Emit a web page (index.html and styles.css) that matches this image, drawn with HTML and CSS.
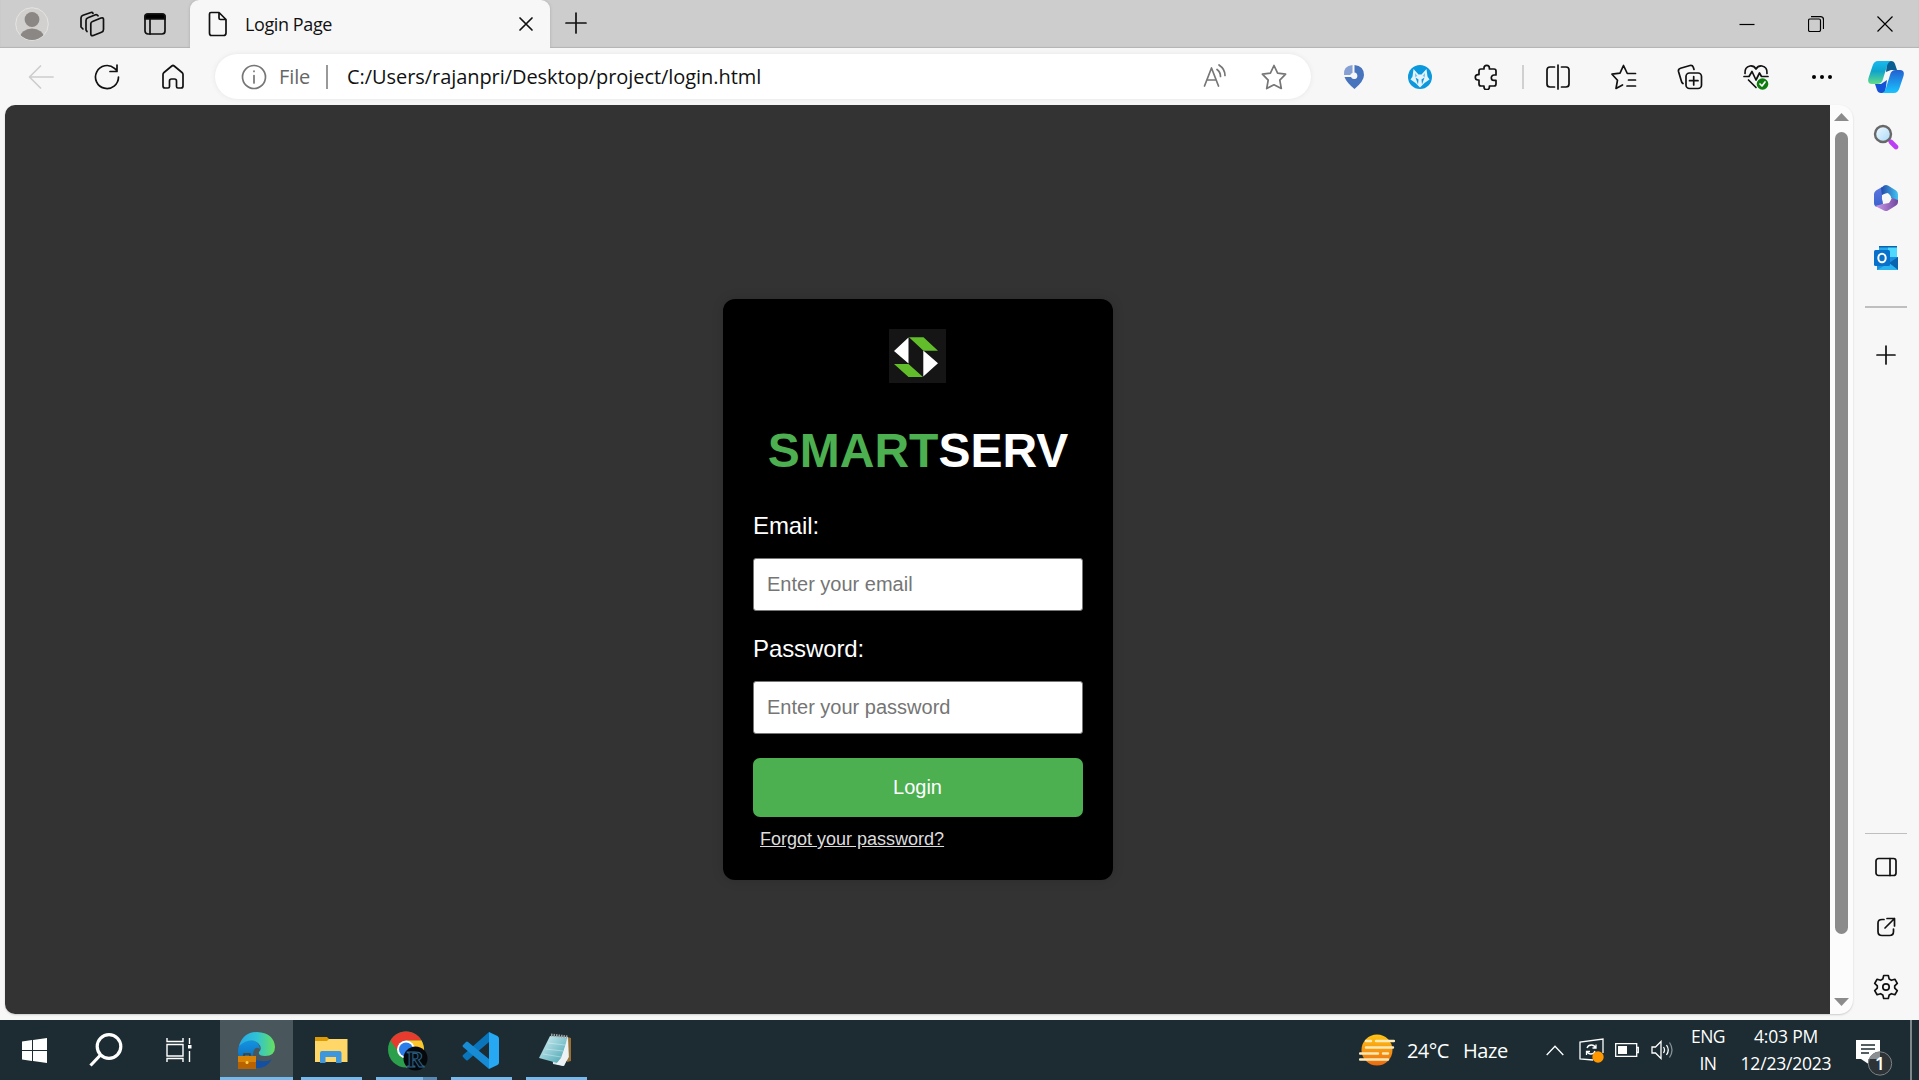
FILE: index.html
```html
<!DOCTYPE html>
<html lang="en">
<head>
<meta charset="utf-8">
<title>Login Page</title>
<link rel="stylesheet" href="styles.css">
</head>
<body>
<div class="screen">
  <header class="tabstrip">
    <div class="strip-tools">
      <svg class="avatar" width="34" height="34" viewBox="0 0 34 34"><defs><clipPath id="av"><circle cx="17" cy="17" r="16"/></clipPath></defs><circle cx="17" cy="17" r="16.3" fill="#d2d0ce" stroke="#e6e4e1"/><g fill="#8b8784" clip-path="url(#av)"><circle cx="17" cy="12.500" r="7.400"/><ellipse cx="17" cy="31" rx="12" ry="9.500"/></g></svg>
      <svg class="line" width="26" height="26" viewBox="0 0 26 26"><path d="M13.500 10.500l8.500-3.500q2.500-.8 2.500 1.500v10q0 2-2 2.800l-8.200 3.200q-2.500.8-2.500-1.700V12.700q0-1.600 1.700-2.200z"/><path d="M8 20.500l-1-1.500V9.500q0-2 2-2.700l7.500-3q1.500-.5 2.500 1M4 18l-2-2V7q0-2 2-2.700L12 1.500q1.500-.4 2 .8"/></svg>
      <svg class="line" width="24" height="24" viewBox="0 0 24 24"><rect x="2" y="2" width="20" height="20" rx="3"/><path d="M2 4.500q0-2.500 2.500-2.500h15Q22 2 22 4.500V7H2z" fill="#000"/><path d="M7 7v15"/></svg>
    </div>
    <div class="tab">
      <svg class="line" width="20" height="26" viewBox="0 0 20 26"><path d="M3 1.500h8l7 7V22q0 2.500-2.500 2.500h-12Q1.500 24.500 1.500 22V3q0-1.500 1.500-1.500zM11 1.500V7q0 1.500 1.500 1.500H18"/></svg>
      <span class="tab-title">Login Page</span>
      <svg class="line" width="16" height="16" viewBox="0 0 16 16"><path d="M2 2l12 12M14 2L2 14"/></svg>
    </div>
    <svg class="line new-tab" width="22" height="22" viewBox="0 0 22 22"><path d="M11 1v20M1 11h20"/></svg>
    <div class="window-controls">
      <svg class="thin" width="16" height="16" viewBox="0 0 16 16"><path d="M.5 8.500h15"/></svg>
      <svg class="thin" width="16" height="16" viewBox="0 0 16 16"><rect x=".5" y="3" width="12" height="12.500" rx="1.500"/><path d="M3 .7h9.500q3 0 3 3V13"/></svg>
      <svg class="thin" width="16" height="16" viewBox="0 0 16 16"><path d="M.5.5l15 15M15.500.5l-15 15"/></svg>
    </div>
  </header>

  <nav class="toolbar">
    <div class="cells nav-cells">
      <span class="cell"><svg class="line faded" width="26" height="24" viewBox="0 0 26 24"><path d="M25 12H2M12.500 1L1.500 12l11 11"/></svg></span>
      <span class="cell"><svg class="line" width="26" height="26" viewBox="0 0 26 26"><path d="M24.500 13a11.500 11.500 0 1 1-4-8.700L23 6.700M23 1v6.500h-7"/></svg></span>
      <span class="cell"><svg class="line" width="24" height="26" viewBox="0 0 24 26"><path d="M2 10.500q0-1.200 1-2L10.800 2q1.200-1 2.400 0L21 8.500q1 .8 1 2V22q0 2-2 2h-3q-1.500 0-1.500-1.500V17q0-2-2-2h-3q-2 0-2 2v5.500Q8.500 24 7 24H4q-2 0-2-2z"/></svg></span>
    </div>
    <div class="address">
      <svg class="line gray" width="26" height="26" viewBox="0 0 26 26"><circle cx="13" cy="13" r="11.500"/><path d="M13 11.500V19M13 7v.5"/></svg>
      <span class="scheme">File</span>
      <span class="bar"></span>
      <span class="url">C:/Users/rajanpri/Desktop/project/login.html</span>
      <svg class="line gray read" width="24" height="24" viewBox="0 0 24 24"><path d="M1.500 22L8.500 4l7 18M4 16h9M14 5.500q3.500 2.500 3.500 7M16 1q6 4 6 10.500"/></svg>
      <svg class="line gray" width="26" height="26" viewBox="0 0 26 26"><path d="M13 1.500l3.600 7.700 8 1-5.800 6 1.500 8.300L13 20.800l-7.300 3.700 1.500-8.300-5.800-6 8-1z"/></svg>
    </div>
    <div class="cells tool-cells">
      <span class="cell"><svg width="22" height="26" viewBox="0 0 22 26"><path d="M9.500 1v7.500L7 11H1Q0 2 9.500 1z" fill="#87a0d4"/><path d="M11.500 1q9.500 1 9.500 10 0 6-9.500 14Q3.500 18.500 1.500 13H8a3.300 3.300 0 1 0 3.500-4.500z" fill="#4873bd"/></svg></span>
      <span class="cell"><svg width="26" height="26" viewBox="0 0 26 26"><circle cx="13" cy="13" r="12" fill="#0b98dc"/><path d="M6.500 5l5 5.500h3l5-5.500 1 7.500 2 3-5 3.500-4.500 4.500-4.500-4.500-5-3.500 2-3z" fill="#e4f3fc"/><path d="M8.500 13.500l3 2-.5 5zM17.500 13.500l-3 2 .5 5z" fill="#0b98dc"/><path d="M8 9l2.500 3-2.500 1zM18 9l-2.500 3 2.500 1z" fill="#7cc8ee"/></svg></span>
      <span class="cell"><svg class="line" width="24" height="26" viewBox="0 0 24 26"><path d="M5 7q0-2 2-2h3V4a2.700 2.700 0 0 1 5.400 0v1H20q2 0 2 2v4h-2a2.700 2.700 0 0 0 0 5.400h2V20q0 2-2 2h-4.600v1a2.700 2.700 0 0 1-5.400 0v-1H7q-2 0-2-2v-4H4a2.700 2.700 0 0 1 0-5.400h1z"/></svg></span>
      <span class="split"></span>
      <span class="cell"><svg class="line" width="26" height="26" viewBox="0 0 26 26"><path d="M13 1v24M9.500 3H5Q2 3 2 6v14q0 3 3 3h4.500M16.500 3H21q3 0 3 3v14q0 3-3 3h-4.500"/></svg></span>
      <span class="cell"><svg class="line" width="28" height="26" viewBox="0 0 28 26"><path d="M25.500 9.500h-8.200L13.500 1.500 10 9.200l-8 1 5.500 6L6 24.500l6.500-3.500M18.500 16h7M17 22h8.500"/></svg></span>
      <span class="cell"><svg class="line" width="26" height="26" viewBox="0 0 26 26"><rect x="9" y="9" width="15.500" height="15.500" rx="3.500"/><path d="M16.700 12.500v8.500M12.500 16.700H21M6 19.500q-1.200-.8-1.500-2L1.500 7.500Q1 5 3.500 4.200L13 1.500q2.500-.5 3.300 1.700l.7 2.300"/></svg></span>
      <span class="cell heart"><svg class="line" width="26" height="26" viewBox="0 0 26 26"><path d="M2 9.500Q1.500 3 7 2q4-.5 6 3 2-3.500 6-3 5.500 1 5 7.500M1 12.500h5l3-5 4 8.500 3.500-7 2 3.500H25M5.500 16l7.500 7.500"/><circle cx="19.500" cy="20" r="5.800" fill="#107c10" stroke="none"/><path d="M17 20l2 2 3-4" stroke="#fff"/></svg></span>
      <span class="cell"><svg width="24" height="6" viewBox="0 0 24 6"><circle cx="4" cy="3" r="2"/><circle cx="12" cy="3" r="2"/><circle cx="20" cy="3" r="2"/></svg></span>
      <span class="cell copilot"><svg width="36" height="34" viewBox="0 0 36 34"><defs><linearGradient id="cg1" x1="0" y1="0" x2="0" y2="1"><stop offset="0" stop-color="#18b9f0"/><stop offset=".45" stop-color="#0fa4cc"/><stop offset="1" stop-color="#62dc87"/></linearGradient><linearGradient id="cg2" x1="0" y1="0" x2="0" y2="1"><stop offset="0" stop-color="#2460d0"/><stop offset="1" stop-color="#18c4ff"/></linearGradient></defs><path d="M19 1h4q3 0 4 3l2 6h-6l-5 2z" fill="#0b5d91"/><path d="M17 33h-4q-3 0-4-3l-2-6h6l6-4z" fill="#1453d8"/><path d="M10 1h13q-3 1-4 5l-4 13q-1 5-6 5H4q-5 0-3.500-6l4-12Q6 1 10 1z" fill="url(#cg1)"/><path d="M26 33H14q3-1 4-5l4-13q1-5 6-5h4q5 0 3.500 6l-4 12q-1.500 5-5.500 5z" fill="url(#cg2)"/></svg></span>
    </div>
  </nav>

  <div class="workspace">
    <div class="frame">
      <main class="page">
        <form class="card">
          <svg class="logo" width="57" height="54" viewBox="0 0 57 54"><path fill="#151515" d="M0 0h57v54H0z"/><path fill="#fff" d="M19.500 8.500v26L5 22zM34.300 21.500v26L49 34.300z"/><path fill="#62bd2a" d="M20 8.300h14.500L49 21.700H34.500zM5 35h14.500l14.500 13H19.500z"/></svg>
          <h1 class="brand"><span class="brand-green">SMART</span>SERV</h1>
          <label class="label" for="email">Email:</label>
          <input class="field" id="email" type="email" placeholder="Enter your email">
          <label class="label" for="password">Password:</label>
          <input class="field" id="password" type="password" placeholder="Enter your password">
          <button class="submit" type="button">Login</button>
          <a class="forgot" href="#">Forgot your password?</a>
        </form>
      </main>
      <div class="scrollbar">
        <svg width="15" height="8" viewBox="0 0 15 8"><path d="M7.500 0L15 8H0z" fill="#8b8b8b"/></svg>
        <span class="thumb"></span>
        <svg class="down" width="15" height="8" viewBox="0 0 15 8"><path d="M7.500 8L15 0H0z" fill="#8b8b8b"/></svg>
      </div>
    </div>
    <aside class="sidebar">
      <svg class="side-search" width="26" height="26" viewBox="0 0 26 26"><defs><linearGradient id="lens" x1="0" y1="0" x2="1" y2="1"><stop offset="0" stop-color="#f1fbff"/><stop offset="1" stop-color="#a9d8f8"/></linearGradient></defs><path d="M15 15l3.500 3.500" stroke="#777" stroke-width="3"/><circle cx="10" cy="10" r="8" fill="url(#lens)" stroke="#686868" stroke-width="2.400"/><path d="M18 18l5 5" stroke="#bd3cf5" stroke-width="4.600" stroke-linecap="round"/></svg>
      <svg width="26" height="28" viewBox="0 0 26 28"><defs><linearGradient id="m1" x1="0" y1="0" x2="0" y2="1"><stop offset="0" stop-color="#5c76df"/><stop offset="1" stop-color="#3b62cd"/></linearGradient><linearGradient id="m2"><stop offset="0" stop-color="#2348a8"/><stop offset="1" stop-color="#42c4f3"/></linearGradient><linearGradient id="m3"><stop offset="0" stop-color="#cf9bea"/><stop offset="1" stop-color="#70479f"/></linearGradient></defs><path d="M9 3L3 6.500Q1 8 1 10v9q0 3 3 4l6-3-1-8z" fill="url(#m1)"/><path d="M8 4l3-2.500q2-1 4 0l8 5q2 1.500 2 4V18l-7-4-3-5-6 2z" fill="url(#m2)"/><path d="M2 22l8-2 6-1 3-5 6 2v2q0 2-2 3.500l-8 5q-2 1-4 0z" fill="url(#m3)"/><circle cx="13.500" cy="14" r="4.600" fill="#f7f7f7"/></svg>
      <svg class="side-mail" width="26" height="26" viewBox="0 0 26 26"><path d="M6 1h18v12H6z" fill="#50d9ff"/><path d="M6 1h9v12H6z" fill="#28a8ea"/><path d="M6 1h18v1.500H6z" fill="#0864b0"/><path d="M4 12h21v13H4z" fill="#1990df"/><path d="M25 12l-9 6 9 7z" fill="#0b65ae"/><path d="M4 25l12-7 9 7z" fill="#29b4ef"/><rect x="1" y="5" width="16" height="16" rx="1.500" fill="#0871cb"/><ellipse cx="9" cy="13" rx="3.700" ry="4.200" fill="none" stroke="#fff" stroke-width="2"/></svg>
      <span class="side-rule"></span>
      <svg class="line side-plus" width="20" height="20" viewBox="0 0 20 20"><path d="M10 1v18M1 10h18"/></svg>
      <div class="side-bottom">
        <svg class="line" width="24" height="20" viewBox="0 0 24 20"><rect x="2" y="1.500" width="20" height="17" rx="2.500"/><path d="M16 1.500v17"/></svg>
        <svg class="line" width="20" height="20" viewBox="0 0 20 20"><path d="M8 2.500H6Q2 2.500 2 6v8.500Q2 18.500 6 18.500h7.500q4 0 4-4V12M11 1.500h7.500V9M18.500 1.500L9 11"/></svg>
        <svg class="line" width="26" height="26" viewBox="0 0 26 26"><path d="M10.700 1.500h4.600l.9 3.600 2.200 1.200 3.500-1L24.300 9.400l-2.600 2.500v2.200l2.600 2.500-2.400 4.100-3.500-1-2.200 1.200-.9 3.600h-4.600l-.9-3.600-2.200-1.200-3.500 1-2.400-4.100 2.600-2.500v-2.200L1.700 9.400l2.400-4.100 3.500 1 2.200-1.200z"/><circle cx="13" cy="13" r="3.200"/></svg>
      </div>
    </aside>
  </div>

  <footer class="taskbar">
    <span class="sys"><svg width="25" height="25" viewBox="0 0 25 25" fill="#fff"><path d="M0 3.500l10-1.400V12H0zM11 2l14-2v12H11zM0 13h10v9.900l-10-1.400zM11 13h14v12l-14-2z"/></svg></span>
    <span class="sys"><svg width="34" height="34" viewBox="0 0 34 34" fill="none" stroke="#fff" stroke-width="3.200"><circle cx="20" cy="13.500" r="11.800"/><path d="M11.500 22L1.500 32.500"/></svg></span>
    <span class="sys"><svg width="26" height="24" viewBox="0 0 26 24" fill="none" stroke="#fff" stroke-width="1.400"><path d="M1 6.500h16V18H1zM1 0v3.500h16V0M1 24v-3.500h16V24M23.500 0v6M23.500 13v11"/><path d="M22 7h3.500v3.500H22z" fill="#fff" stroke="none"/></svg></span>
    <span class="app app-active"><svg width="37" height="37" viewBox="0 0 37 37"><defs><linearGradient id="e1"><stop offset="0" stop-color="#27a8e3"/><stop offset=".5" stop-color="#2fc3d5"/><stop offset="1" stop-color="#68df5b"/></linearGradient><linearGradient id="e2" x1="0" y1="0" x2="0" y2="1"><stop offset="0" stop-color="#1494e0"/><stop offset="1" stop-color="#0a62b5"/></linearGradient></defs><path d="M14 16q-2 12 9 13 7 1 11-2-5 9-14 9Q6 36 7 22z" fill="#1450a2"/><path d="M0 20Q0 8 11 8q10 0 11 9-4-3-6 1-3 6 2 13-3 4-9 3Q0 29 0 20z" fill="url(#e2)"/><path d="M1 14Q5 0 19 0q17 1 18 15 0 9-10 9-7 0-6-4 4-4-1-9Q12 5 1 14z" fill="url(#e1)"/><path d="M0 24h18v13H0z" fill="#d98306"/><path d="M0 30h18v7H0z" fill="#b86200"/><path d="M6 24v-2h6v2" fill="none" stroke="#5b3a10" stroke-width="1.500"/><circle cx="9" cy="30.500" r="1.500" fill="#ffd340"/></svg></span>
    <span class="app"><svg width="33" height="28" viewBox="0 0 33 28"><path d="M0 1h12l3 3v6H0z" fill="#dc9b05"/><path d="M0 5h12l2-2h18.500v23H0z" fill="#ffd768"/><path d="M5 27V17q0-2 2-2h17.500q2 0 2 2v10H21v-6H10.500v6z" fill="#3e97dd"/></svg></span>
    <span class="app app-stack"><svg width="40" height="40" viewBox="0 0 40 40"><circle cx="18" cy="18.500" r="18" fill="#2b9f4b"/><path d="M2.500 9.500A18 18 0 0 1 33.600 9.500H18q-8 0-8.500 10z" fill="#e63b2e"/><path d="M18 9.500h15.600Q40 23 30 32l-12 4.500 8-14z" fill="#fcc62c"/><circle cx="18" cy="18.500" r="9" fill="#fff"/><circle cx="18" cy="18.500" r="7" fill="#2b7de9"/><circle cx="27.500" cy="27.500" r="12" fill="#05090d"/><text x="27.500" y="35.500" text-anchor="middle" font-family="Liberation Serif, serif" font-size="24" font-weight="bold" fill="#0b1015" stroke="#2c6288" stroke-width="1">R</text></svg></span>
    <span class="app"><svg width="37" height="37" viewBox="0 0 37 37"><path d="M27 0v10L6 28q-1 1-2 0l-3-3q-1-1 0-2z" fill="#0a75ba"/><path d="M1 13l3-3q1-1 2 0l21 17v10L1 15q-1-1 0-2z" fill="#178bd4"/><path d="M27 0l8.500 4Q37 5 37 6.500v24q0 1.500-1.500 2.500L27 37z" fill="#27a8f2"/></svg></span>
    <span class="app"><svg width="34" height="34" viewBox="0 0 34 34"><defs><linearGradient id="np" x1="0" y1="0" x2="1" y2="1"><stop offset="0" stop-color="#d9f3f7"/><stop offset="1" stop-color="#3f9fae"/></linearGradient></defs><path d="M29 4l4 1v23l-4 1z" fill="#9a7134"/><path d="M13 3l17 1 1 20-6 9-10-2z" fill="#d8e3e7"/><path d="M12 3l17 2-6 26L1 25z" fill="url(#np)"/><path d="M23 25l7-20v20l-4 8-8-2z" fill="#edf3f5"/><path d="M13 2l17 2" stroke="#9aa3a7" stroke-width="3" stroke-dasharray="1.500 1"/><path d="M10 10l17 2M8 16l17 2M5 21l18 3" stroke="#fff" stroke-opacity=".35"/></svg></span>

    <div class="tray">
      <svg width="36" height="32" viewBox="0 0 36 32"><defs><linearGradient id="sun" x1="0" y1="0" x2="0" y2="1"><stop offset="0" stop-color="#ffc515"/><stop offset="1" stop-color="#ec6b10"/></linearGradient></defs><circle cx="18" cy="16" r="15.500" fill="url(#sun)"/><g stroke="#ffe9b5" stroke-width="2.400" stroke-linecap="round"><path d="M7 7h5M17 7h18M7 13.500h27M1 19.500h18M24 19.500h5M1 25.500h28"/></g></svg>
      <span class="weather temp">24°C</span>
      <span class="weather haze">Haze</span>
      <svg class="tray-line chevron" width="18" height="11" viewBox="0 0 18 11"><path d="M.7 10L9 1.200 17.300 10"/></svg>
      <svg class="tray-line update" width="26" height="26" viewBox="0 0 26 26"><path d="M14 23L1 22V5l23-3v14M8 11q1-3 4.500-3 3 0 4 3M17 7.500V11h-3.500M16 14q-1 3-4 3t-4-2.500M7.500 18v-3.500H11"/><circle cx="19" cy="20" r="5.700" fill="#ff9800" stroke="none"/></svg>
      <svg class="tray-line battery" width="24" height="14" viewBox="0 0 24 14"><path d="M.7.7h21v12.600H.7zM21.700 4.500h1.600v5h-1.600"/><path d="M3 3h9v8H3z" fill="#fff" stroke="none"/></svg>
      <svg class="tray-line speaker" width="23" height="20" viewBox="0 0 23 20"><path d="M1 7h3.500L10 1.500v17L4.500 13H1zM12.500 7q2 3 0 6M15.500 5q3.500 5 0 10"/><path d="M18.500 2.500q5 7.500 0 15" stroke="#869095"/></svg>
      <div class="two-line lang"><span>ENG</span><span>IN</span></div>
      <div class="two-line clock"><span>4:03 PM</span><span>12/23/2023</span></div>
      <svg class="notice" width="38" height="38" viewBox="0 0 38 38"><path d="M1 1h24v19H13.500v5L6 20H1z" fill="#fff"/><path d="M6 6h14M6 10h14M6 14h8" stroke="#1c2b31" stroke-width="1.300"/><circle cx="25" cy="24.500" r="11.700" fill="#2d3336" stroke="#7c8386"/><path d="M14 20a11.500 11.500 0 0 1 11-7v7z" fill="#8b8f91"/><text x="25" y="31" text-anchor="middle" font-family="Open Sans, sans-serif" font-size="18" font-weight="600" fill="#fff">1</text></svg>
      <span class="peek"></span>
    </div>
  </footer>
</div>
</body>
</html>
```

FILE: styles.css
```css
* { box-sizing: border-box; }
body { margin: 0; overflow: hidden; font-family: "Open Sans", "Noto Sans", sans-serif; }
svg { display: block; flex: none; }
.screen { width: 1919px; height: 1080px; display: flex; flex-direction: column; background: #f7f7f7; }
.line { fill: none; stroke: #111; stroke-width: 1.7; stroke-linejoin: round; stroke-linecap: round; }
.thin { fill: none; stroke: #000; stroke-width: 1.2; }
.gray { stroke: #767676; }
.faded { stroke: #cdcdcd; }

.tabstrip { height: 48px; display: flex; background: #cdcdcd; box-shadow: inset 0 -1px 1px #b4b4b4; }
.strip-tools { width: 190px; padding-left: 15px; display: flex; align-items: center; }
.strip-tools .line { margin-left: 30px; }
.strip-tools .line + .line { margin-left: 38px; }
.tab { width: 360px; height: 48px; padding: 0 16px 0 18px; display: flex; align-items: center; background: #f7f7f7; border-radius: 9px 9px 0 0; box-shadow: 0 0 3px #aaa; clip-path: inset(0 -4px 0 -4px); }
.tab-title { margin-left: 17px; padding-bottom: 1px; flex: 1; font-size: 18px; letter-spacing: -.4px; color: #111; white-space: nowrap; }
.new-tab { margin: 12px 0 0 15px; }
.window-controls { margin-left: auto; padding: 0 26px 0 0; display: flex; align-items: center; gap: 53px; }

.toolbar { height: 57px; display: flex; align-items: center; padding-left: 8px; }
.cells { display: flex; align-items: center; height: 100%; }
.cell { width: 66px; display: flex; justify-content: center; }
.address { width: 1096px; height: 45px; margin-left: 9px; padding: 0 24px 0 26px; display: flex; align-items: center; border-radius: 23px; background: #fff; box-shadow: 0 0 5px #e5e5e5; font-size: 20px; white-space: nowrap; }
.scheme { width: 48px; padding-left: 12px; color: #666; letter-spacing: -.1px; }
.bar { width: 2px; height: 24px; margin-left: 11px; background: #999; }
.url { margin-left: 19px; flex: 1; color: #111; letter-spacing: -.06px; }
.read { margin: 0 34px 2px 0; }
.tool-cells { margin-left: 10px; }
.split { width: 2px; height: 24px; margin: 0 1px 0 3px; background: #d0d0d0; }
.copilot { width: 62px; }
.heart { padding-top: 1px; }

.workspace { height: 915px; display: flex; }
.frame { width: 1848px; height: 909px; margin-left: 5px; display: flex; overflow: hidden; border-radius: 10px 14px 14px 10px; background: #fcfcfc; box-shadow: 0 1px 2px #ccc; }
.page { width: 1825px; height: 909px; display: flex; justify-content: center; align-items: flex-start; padding: 194px 0 0 1px; background: #333; }
.card { width: 390px; height: 581px; padding: 30px; display: flex; flex-direction: column; border-radius: 12px; background: #000; box-shadow: 0 0 12px rgba(0, 0, 0, .15); font-family: "Liberation Sans", Arial, sans-serif; color: #fff; }
.logo { align-self: center; margin-right: 1px; }
.brand { margin: 40px 0 0; text-align: center; font-size: 48px; line-height: 56px; }
.brand-green { color: #4caf50; }
.label { height: 28px; margin: 33px 0 0; font-size: 24px; line-height: 28px; letter-spacing: -.1px; }
.field { width: 330px; height: 53px; margin: 18px 0 0; padding: 0 13px; border: 1px solid #767676; border-radius: 3px; background: #fff; font: 20px "Liberation Sans", Arial, sans-serif; }
.field + .label { margin-top: 24px; }
.field::placeholder { color: #757575; }
.submit { height: 59px; margin: 24px 0 0; padding: 0 7px 0 6px; border: 0; border-radius: 7px; background: #4caf50; color: #fff; font: 20px "Liberation Sans", Arial, sans-serif; }
.forgot { margin: 12px 0 0 7px; align-self: flex-start; color: #ddd; font-size: 18px; line-height: 20px; }

.scrollbar { width: 23px; padding: 8px 5px 8px 4px; display: flex; flex-direction: column; align-items: flex-start; }
.thumb { width: 13px; height: 802px; margin: 11px 0 0 1px; border-radius: 7px; background: #8b8b8b; }
.down { margin-top: auto; }
.sidebar { width: 66px; padding: 19px 1px 20px 0; display: flex; flex-direction: column; align-items: center; }
.sidebar > svg + svg { margin-top: 34px; }
.sidebar > svg + .side-mail { margin-top: 33px; }
.side-rule { width: 42px; height: 2px; flex: none; margin-top: 35px; background: #bfbfbf; }
.side-plus { margin-top: 37px; }
.side-bottom { width: 42px; margin-top: auto; padding-top: 23px; border-top: 1px solid #bfbfbf; display: flex; flex-direction: column; align-items: center; gap: 40px; }
.side-bottom svg:last-child { margin-top: -3px; }

.taskbar { height: 60px; display: flex; background: #1c2c32; color: #fff; }
.sys { width: 72px; padding-right: 3px; display: flex; align-items: center; justify-content: center; }
.sys + .sys { padding-right: 4px; }
.sys + .sys + .sys { width: 76px; padding-right: 6px; }
.app { width: 61px; height: 60px; margin-left: 14px; padding: 3px 3px 0 0; display: flex; align-items: center; justify-content: center; border-bottom: 3px solid #76b9ed; }
.app-active { width: 73px; margin: 0 -6px 0 0; padding-right: 1px; background: #49575d; }
.app-active + .app { margin-left: 14px; padding-right: 1px; }
.app-stack { padding: 5px 0 0 3px; border-style: solid; border-width: 0 0 3px; border-image: linear-gradient(90deg, #76b9ed 47px, #5689b5 47px) 0 0 3; }
.tray { margin-left: auto; display: flex; align-items: center; white-space: nowrap; }
.tray-line { fill: none; stroke: #fff; stroke-width: 1.3; }
.weather { font-size: 20px; padding-top: 1px; }
.temp { width: 56px; padding-left: 12px; letter-spacing: -.6px; }
.haze { width: 95px; padding-left: 12px; letter-spacing: -.4px; }
.chevron { margin-right: 15px; }
.update { margin-right: 10px; }
.battery { margin-right: 12px; }
.two-line { display: flex; flex-direction: column; align-items: center; font-size: 17.5px; line-height: 27px; }
.lang { width: 34px; margin-left: 17px; letter-spacing: -.6px; }
.clock { width: 94px; margin-left: 14px; letter-spacing: -.2px; }
.notice { margin: 15px 0 0 22px; }
.peek { width: 2px; height: 60px; margin: 0 7px 0 17px; background: #7b878b; }
```
